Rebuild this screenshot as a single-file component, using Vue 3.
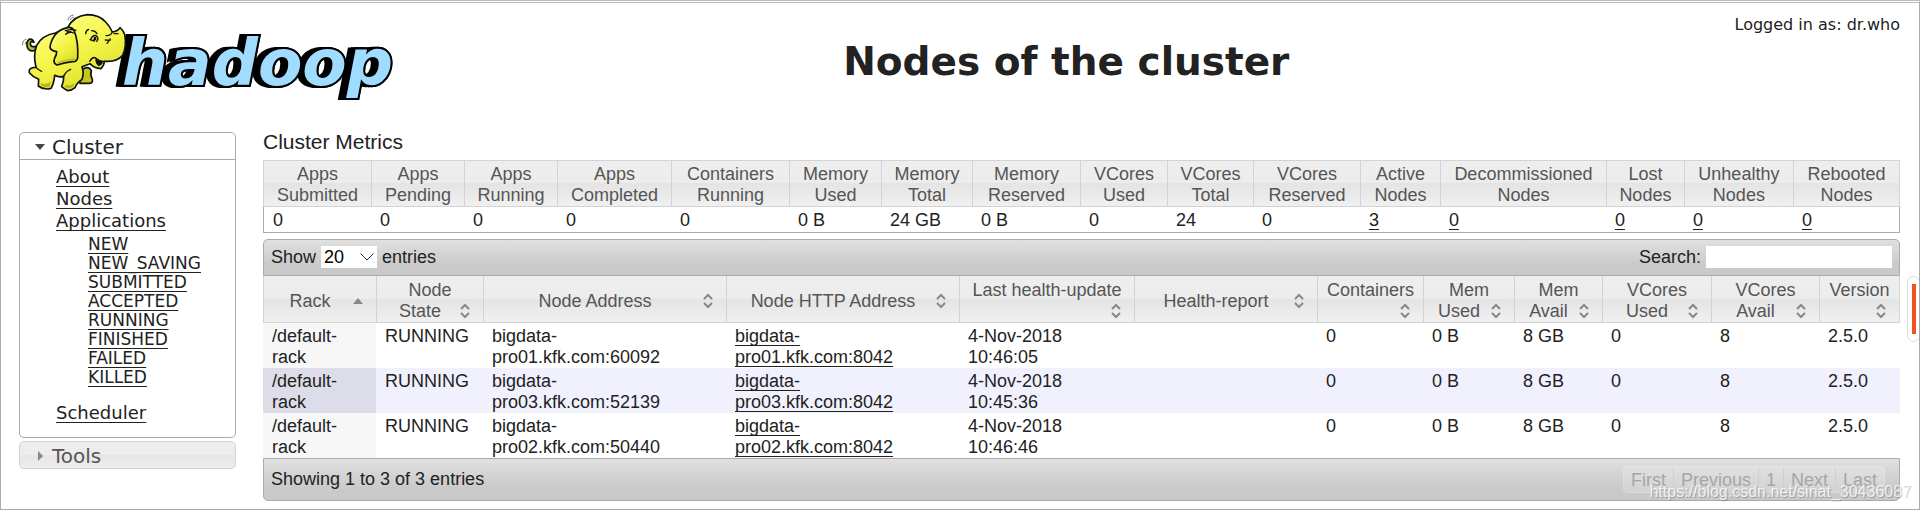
<template>
    <div class="page">
        <header class="page-header">
            <a href="#" class="logo" aria-label="hadoop">
                <svg viewBox="60 33 1134 279" width="378" height="93">
                    <g fill="none" stroke="#777" stroke-width="3" stroke-linecap="round">
                        <path d="M204 60 Q204 48 220 45 M211 59 Q212 54 221 51 M67 135 Q68 120 78 117 M76 132 Q77 125 83 122" />
                    </g>
                    <text class="wordmark shade" x="366" y="254" aria-hidden="true">hadoop</text>
                    <text class="wordmark" x="366" y="254">hadoop</text>
                    <g fill="#eef03a" stroke="#111" stroke-width="5" stroke-linejoin="round" stroke-linecap="round">
                        <path d="M106 151 Q89 157 83 144 Q77 128 87 118 Q98 115 102 127 Q91 121 91 132 Q93 143 108 139 Z" fill="#b9bc22" />
                        <path d="M247 208 Q266 196 274 212 Q270 225 277 238 Q279 249 269 250 L240 250 Q238 226 247 208 Z" fill="#c2c51c" />
                        <path d="M166 99 Q126 106 110 136 Q99 165 108 202 Q84 202 88 218 Q99 231 116 238 L115 258 Q131 271 153 265 Q162 250 164 226 Q176 233 191 229 Q192 242 185 260 Q193 267 203 272 Q215 272 225 263 Q230 249 246 238 Q253 219 246 200 L270 191 Q282 205 303 206 Q313 196 313 184 Q351 187 368 166 Q381 139 374 103 Q367 88 360 83 Q354 94 337 96 Q329 78 317 66 Q298 44 262 44 Q220 48 202 84 Z" fill="url(#skin)" />
                        <path d="M222 91 Q236 124 233 174 Q229 187 218 185 Q194 188 171 195 Q158 190 164 174 Q171 162 170 155 Q154 153 150 143 Q151 125 165 105 Q177 88 205 82 Q216 81 222 91 Z" fill="url(#skin)" />
                    </g>
                    <g fill="none" stroke="#111" stroke-width="4" stroke-linecap="round" stroke-linejoin="round">
                        <path d="M196 92 Q214 86 228 91 M201 95 Q212 94 220 99 M197 103 Q205 96 213 97 M257 101 Q257 92 266 88 M275 92 Q285 92 291 101" />
                        <path d="M272 119 Q277 104 289 107 Q298 115 290 124 M270 119 L283 123 M318 107 Q332 108 337 96 M316 120 L330 121 M321 130 L331 117 M342 101 L354 101" />
                        <path d="M269 184 Q277 170 286 173 Q301 186 313 184 M108 202 Q116 211 125 214 M191 229 Q197 214 212 208" />
                    </g>
                    <path d="M286 174 Q285 191 296 199 Q309 194 309 184 Q298 183 286 174 Z" fill="#111" />
                    <path d="M282 111 Q290 107 289 119 Q284 124 280 119 Z" fill="#111" />
                    <path d="M122 255 Q133 265 149 260 L153 244 Q139 257 122 249 Z M195 260 Q205 269 219 260 L223 248 Q211 260 197 254 Z M172 187 Q194 178 224 175 L225 180 Q194 180 173 192 Z" fill="#b5b91a" />
                    <defs>
                        <linearGradient id="skin" x1="0" y1="0" x2="0.6" y2="1">
                            <stop offset="0" stop-color="#ffff98" />
                            <stop offset="0.55" stop-color="#f5f64a" />
                            <stop offset="1" stop-color="#dde02c" />
                        </linearGradient>
                    </defs>
                </svg>
            </a>
            <h1>Nodes of the cluster</h1>
            <div class="user">Logged in as: dr.who</div>
        </header>

        <div class="body">
            <nav class="sidebar">
                <section class="panel open">
                    <h3>
                        <button type="button" @click="clusterOpen = !clusterOpen">
                            <svg viewBox="0 0 10 10" width="10" height="10"><path d="M0 2h10L5 8z" /></svg>
                            Cluster
                        </button>
                    </h3>
                    <ul v-show="clusterOpen" class="menu">
                        <li><a href="#">About</a></li>
                        <li><a href="#">Nodes</a></li>
                        <li>
                            <a href="#">Applications</a>
                            <ul class="states">
                                <li v-for="state in appStates" :key="state"><a href="#">{{ state }}</a></li>
                            </ul>
                        </li>
                        <li><a href="#">Scheduler</a></li>
                    </ul>
                </section>
                <section class="panel closed">
                    <h3>
                        <button type="button">
                            <svg viewBox="0 0 10 10" width="10" height="10"><path d="M3 0v10l5-5z" /></svg>
                            Tools
                        </button>
                    </h3>
                </section>
            </nav>

            <main class="content">
                <h2>Cluster Metrics</h2>
                <table class="grid metrics">
                    <colgroup>
                        <col v-for="m in metrics" :key="m.label" :style="{ width: share(m, metrics) }" />
                    </colgroup>
                    <thead>
                        <tr>
                            <th v-for="m in metrics" :key="m.label">{{ m.label }}</th>
                        </tr>
                    </thead>
                    <tbody>
                        <tr>
                            <td v-for="m in metrics" :key="m.label">
                                <a v-if="m.link" href="#">{{ m.value }}</a>
                                <template v-else>{{ m.value }}</template>
                            </td>
                        </tr>
                    </tbody>
                </table>

                <div class="bar top">
                    <div class="length">
                        <label for="length">Show</label>
                        <span class="select">
                            <select id="length" v-model="pageSize">
                                <option v-for="n in [20, 40, 60, 80, 100]" :key="n" :value="n">{{ n }}</option>
                            </select>
                            <svg viewBox="0 0 14 8" width="14" height="8"><path d="M0.5 0.5L7 7L13.500 0.5" /></svg>
                        </span>
                        <span>entries</span>
                    </div>
                    <div class="search">
                        <label for="search">Search:</label>
                        <input id="search" v-model="query" type="text" />
                    </div>
                </div>

                <table class="grid nodes">
                    <colgroup>
                        <col v-for="c in columns" :key="c.label" :style="{ width: share(c, columns) }" />
                    </colgroup>
                    <thead>
                        <tr>
                            <th v-for="c in columns" :key="c.label">
                                <button type="button" class="sort">{{ c.label }}<svg viewBox="0 0 20 21" width="20" height="21">
                                    <path v-if="c.sorted" class="solid" d="M5 13h10l-5-6z" />
                                    <path v-else d="M6 8l4-4l4 4M6 12l4 4l4-4" />
                                </svg></button>
                            </th>
                        </tr>
                    </thead>
                    <tbody>
                        <tr v-for="node in filteredNodes" :key="node.address">
                            <td>{{ node.rack }}</td>
                            <td>RUNNING</td>
                            <td>{{ node.address }}</td>
                            <td><a href="#">{{ node.http }}</a></td>
                            <td>{{ node.updated }}</td>
                            <td></td>
                            <td>0</td>
                            <td>0 B</td>
                            <td>8 GB</td>
                            <td>0</td>
                            <td>8</td>
                            <td>2.5.0</td>
                        </tr>
                    </tbody>
                </table>

                <div class="bar bottom">
                    <div>Showing 1 to 3 of 3 entries</div>
                    <div class="paging">
                        <button v-for="p in pages" :key="p" type="button" disabled>{{ p }}</button>
                    </div>
                </div>
            </main>
        </div>

        <div class="side-handle"></div>
        <div class="watermark">https://blog.csdn.net/sinat_30436087</div>
    </div>
</template>

<script setup>
import { ref, computed } from "vue";

const clusterOpen = ref(true);
const pageSize = ref(20);
const query = ref("");

const appStates = ["NEW", "NEW_SAVING", "SUBMITTED", "ACCEPTED", "RUNNING", "FINISHED", "FAILED", "KILLED"];
const pages = ["First", "Previous", "1", "Next", "Last"];

const metrics = [
    { label: "Apps\nSubmitted", value: "0", weight: 108 },
    { label: "Apps\nPending", value: "0", weight: 93 },
    { label: "Apps\nRunning", value: "0", weight: 93 },
    { label: "Apps\nCompleted", value: "0", weight: 114 },
    { label: "Containers\nRunning", value: "0", weight: 118 },
    { label: "Memory\nUsed", value: "0 B", weight: 92 },
    { label: "Memory\nTotal", value: "24 GB", weight: 91 },
    { label: "Memory\nReserved", value: "0 B", weight: 108 },
    { label: "VCores\nUsed", value: "0", weight: 87 },
    { label: "VCores\nTotal", value: "24", weight: 86 },
    { label: "VCores\nReserved", value: "0", weight: 107 },
    { label: "Active\nNodes", value: "3", weight: 80, link: true },
    { label: "Decommissioned\nNodes", value: "0", weight: 166, link: true },
    { label: "Lost\nNodes", value: "0", weight: 78, link: true },
    { label: "Unhealthy\nNodes", value: "0", weight: 109, link: true },
    { label: "Rebooted\nNodes", value: "0", weight: 107, link: true },
];

const columns = [
    { label: "Rack", weight: 113, sorted: true },
    { label: "Node\nState", weight: 107 },
    { label: "Node Address", weight: 243 },
    { label: "Node HTTP Address", weight: 233 },
    { label: "Last health-update", weight: 175 },
    { label: "Health-report", weight: 183 },
    { label: "Containers", weight: 106 },
    { label: "Mem\nUsed", weight: 91 },
    { label: "Mem\nAvail", weight: 88 },
    { label: "VCores\nUsed", weight: 109 },
    { label: "VCores\nAvail", weight: 108 },
    { label: "Version", weight: 81 },
];

const rack = "/default-\nrack";
const nodes = [
    { rack, address: "bigdata-\npro01.kfk.com:60092", http: "bigdata-\npro01.kfk.com:8042", updated: "4-Nov-2018\n10:46:05" },
    { rack, address: "bigdata-\npro03.kfk.com:52139", http: "bigdata-\npro03.kfk.com:8042", updated: "4-Nov-2018\n10:45:36" },
    { rack, address: "bigdata-\npro02.kfk.com:50440", http: "bigdata-\npro02.kfk.com:8042", updated: "4-Nov-2018\n10:46:46" },
];

const filteredNodes = computed(() => nodes.filter((n) => n.address.includes(query.value)));

// column width as a share of the whole table
const share = (col, all) => {
    const total = all.reduce((sum, c) => sum + c.weight, 0);
    return (col.weight / total) * 100 + "%";
};
</script>

<style>
body {
    margin: 0;
    background: white;
}
</style>

<style scoped>
* {
    box-sizing: border-box;
}

.page {
    position: relative;
    min-height: 100vh;
    border: 1px solid #aaa;
    border-top: 3px double #bbb;
    color: #222;
    font-family: "Liberation Sans", Arial, sans-serif;
    font-size: 18px;
    line-height: 21px;
    overflow: hidden;
}

h1, h2, h3, ul {
    margin: 0;
    padding: 0;
    font-weight: normal;
}

ul {
    list-style: none;
}

button, input, select {
    margin: 0;
    padding: 0;
    border: 0;
    background: none;
    color: inherit;
    font: inherit;
}

a {
    color: #222;
    text-decoration: underline;
    text-decoration-thickness: 1px;
    text-decoration-skip-ink: none;
    text-underline-offset: 3px;
}

.page-header {
    display: grid;
    grid-template-columns: auto 1fr auto;
    padding: 8px 19px 0;
    font-family: "DejaVu Sans", Verdana, sans-serif;
}

.logo svg {
    display: block;
}

.wordmark {
    font-family: "DejaVu Sans", sans-serif;
    font-size: 194px;
    font-weight: bold;
    font-style: italic;
    fill: #a0dcff;
    stroke: #000;
    stroke-width: 12px;
    stroke-linejoin: miter;
    paint-order: stroke;
}

.shade {
    fill: #000;
    filter: drop-shadow(-9px 0 0 #000) drop-shadow(-9px 0 0 #000);
}

h1 {
    padding-top: 28px;
    font-size: 39px;
    font-weight: bold;
    line-height: 46px;
    text-align: center;
}

.user {
    padding-top: 3px;
    font-size: 16px;
}

.body {
    display: flex;
    align-items: flex-start;
    gap: 27px;
    padding: 28px 19px 8px 18px;
}

.sidebar {
    flex: 0 0 217px;
    font-family: "DejaVu Sans", Verdana, sans-serif;
}

.panel {
    border: 1px solid #aaa;
    border-radius: 5px;
}

.panel h3 button {
    display: flex;
    align-items: center;
    gap: 7px;
    width: 100%;
    height: 26px;
    padding: 2px 0 0 15px;
    font-size: 20px;
}

.panel h3 svg {
    fill: #454545;
}

.panel.open h3 {
    border-bottom: 1px solid #aaa;
}

.panel.closed {
    margin-top: 3px;
    border-color: #d3d3d3;
    background: linear-gradient(#eee, #ececec 49%, #e6e6e6 50%, #eee);
    color: #555;
}

.panel.closed svg {
    fill: #888;
}

.menu {
    padding: 6px 0 13px 36px;
    line-height: 22px;
}

.states {
    padding: 3px 0 15px 32px;
    font-size: 17px;
    line-height: 19px;
}

.content {
    flex: 1;
    min-width: 0;
}

h2 {
    padding-bottom: 9px;
    font-size: 21px;
    line-height: 19px;
}

.grid {
    width: 100%;
    table-layout: fixed;
    border-collapse: separate;
    border-spacing: 0;
}

th {
    padding: 4px 8px 0;
    border: solid #d3d3d3;
    border-width: 0 0 1px 1px;
    background: linear-gradient(#eee, #ececec 49%, #e4e4e4 50%, #f0f0f0);
    color: #555;
    font-weight: normal;
    white-space: pre-line;
}

th:last-child {
    border-right-width: 1px;
}

td {
    padding: 3px 0 0 9px;
    vertical-align: top;
    white-space: pre-line;
}

.metrics th {
    padding: 3px 0 0;
    border-top-width: 1px;
}

.metrics td {
    padding-bottom: 1px;
    border-bottom: 1px solid #aaa;
}

.metrics td:first-child {
    border-left: 1px solid #aaa;
}

.metrics td:last-child {
    border-right: 1px solid #aaa;
}

.bar {
    display: flex;
    align-items: center;
    justify-content: space-between;
    border: 1px solid #aaa;
    background: linear-gradient(#e0e0e0, #cacaca 70%, #c9c9c9);
}

.bar.top {
    margin-top: 6px;
    padding: 6px 7px 7px;
    border-radius: 5px 5px 0 0;
}

.bar.bottom {
    padding: 7px 14px 7px 7px;
    border-radius: 0 0 5px 5px;
}

.length, .search {
    display: flex;
    align-items: center;
    gap: 5px;
}

.select {
    display: flex;
    position: relative;
}

.select select {
    width: 56px;
    height: 22px;
    padding-left: 3px;
    appearance: none;
    background: white;
    color: #000;
}

.select svg {
    position: absolute;
    top: 7px;
    right: 3px;
    fill: none;
    stroke: #333;
    pointer-events: none;
}

.search input {
    width: 186px;
    height: 22px;
    padding: 0 4px;
    background: white;
}

.sort {
    display: block;
    width: 100%;
    text-align: center;
    white-space: pre-line;
}

.sort svg {
    float: right;
    fill: none;
    stroke: #888;
    stroke-width: 2;
}

.sort .solid {
    fill: #888;
    stroke: none;
}

.nodes td:first-child {
    background: #f7f7f7;
}

.nodes tbody tr:nth-child(even) td {
    background: #f1f1fe;
}

.nodes tbody tr:nth-child(even) td:first-child {
    background: #dddde9;
}

.paging {
    display: flex;
    border: 1px solid rgba(255, 255, 255, 0.15);
    border-radius: 5px;
    background: rgba(255, 255, 255, 0.2);
    overflow: hidden;
}

.paging button {
    padding: 3px 7px 1px;
    color: #a6a6a6;
}

.paging button + button {
    border-left: 1px solid #d0d0d0;
}

.side-handle {
    position: absolute;
    top: 273px;
    right: -1px;
    width: 13px;
    height: 66px;
    border: 1px solid #ddd;
    border-radius: 7px;
    background: linear-gradient(#f4511e, #f4511e) center / 4px 50px no-repeat white;
}

.watermark {
    position: absolute;
    right: 8px;
    bottom: 7px;
    color: rgba(255, 255, 255, 0.8);
    font-size: 16px;
    text-shadow: 1px 1px 1px rgba(0, 0, 0, 0.25);
}
</style>
